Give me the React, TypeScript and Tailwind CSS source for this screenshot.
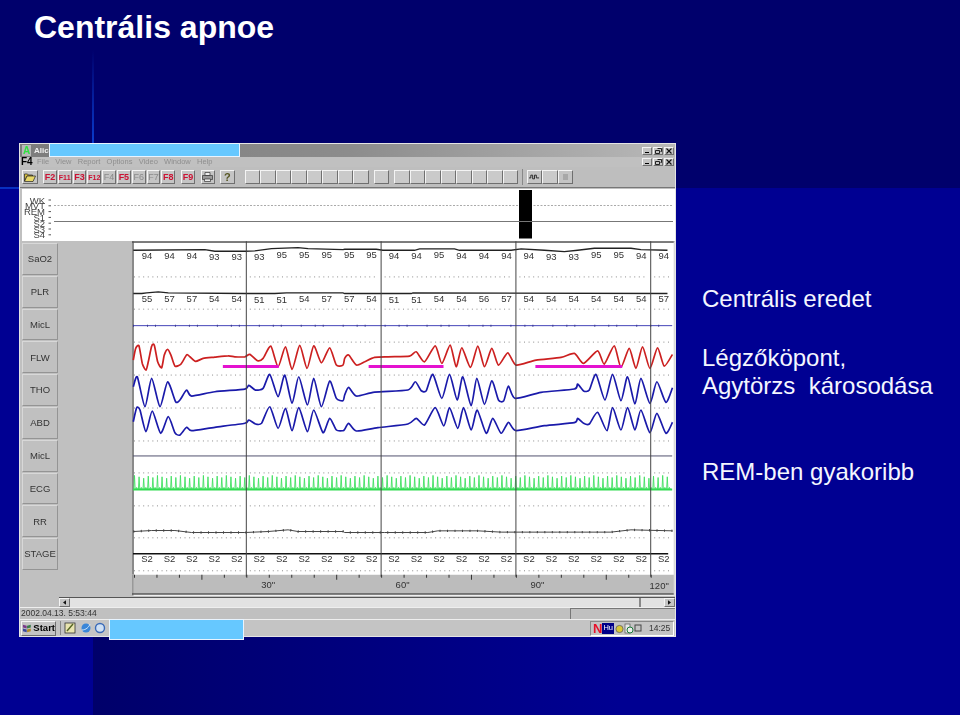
import React from "react";

type Pt = [number, number];
const Z3 = (pts: Pt[]): Pt[] => pts.map(([x, y]) => [15 + x / 3, 240 + y / 3]);
const Z4 = (pts: Pt[]): Pt[] => pts.map(([x, y]) => [345 + x / 3, 240 + y / 3]);
const Z5 = (pts: Pt[]): Pt[] => pts.map(([x, y]) => [15 + x / 3, 440 + y / 3]);
const Z6 = (pts: Pt[]): Pt[] => pts.map(([x, y]) => [345 + x / 3, 440 + y / 3]);

function smooth(p: Pt[], t = 0.11) {
  let d = `M${p[0][0].toFixed(1)} ${p[0][1].toFixed(1)}`;
  for (let i = 0; i < p.length - 1; i++) {
    const a = p[Math.max(0, i - 1)];
    const b = p[i];
    const c = p[i + 1];
    const e = p[Math.min(p.length - 1, i + 2)];
    d += `C${(b[0] + (c[0] - a[0]) * t).toFixed(1)} ${(b[1] + (c[1] - a[1]) * t).toFixed(1)} ${(c[0] - (e[0] - b[0]) * t).toFixed(1)} ${(c[1] - (e[1] - b[1]) * t).toFixed(1)} ${c[0].toFixed(1)} ${c[1].toFixed(1)}`;
  }
  return d;
}

const flw = [
  ...Z3([[355,360],[362,325],[372,317],[382,370],[393,390],[400,365],[410,318],[418,315],[428,365],[440,383],[448,345],[458,328],[468,345],[480,378],[498,372],[515,344],[525,350],[542,364],[565,355],[600,351],[640,347],[660,350],[690,350],[705,343],[728,362],[745,355],[768,318],[790,380],[812,320],[832,388],[855,316],[877,385],[897,317],[920,368],[945,323],[965,375],[985,375]]),
  ...Z4([[0,355],[12,345],[35,375],[60,365],[90,352],[130,350],[195,348],[215,335],[240,365],[272,317],[292,370],[317,315],[335,380],[352,323],[378,382],[400,318],[420,380],[442,325],[462,375],[490,338],[515,375],[575,360],[650,352],[690,340],[718,370],[760,332],[780,372],[810,317],[830,382],[855,325],[875,385],[895,320],[917,385],[940,323],[960,378],[985,343]]),
];
const tho = [
  ...Z3([[355,440],[367,410],[390,500],[410,415],[435,500],[458,425],[482,485],[495,480],[515,450],[530,468],[600,455],[690,447],[702,436],[722,450],[745,445],[765,403],[790,470],[810,405],[832,490],[852,410],[878,495],[897,415],[920,500],[945,423],[965,475],[985,482]]),
  ...Z4([[0,465],[12,442],[35,468],[90,456],[190,450],[212,425],[230,452],[245,452],[265,403],[292,475],[315,403],[338,480],[355,410],[380,497],[397,415],[420,493],[442,422],[462,480],[478,482],[492,438],[512,475],[590,457],[690,447],[700,432],[718,453],[735,450],[755,403],[782,480],[805,403],[830,482],[850,410],[872,492],[890,415],[917,490],[938,425],[965,487],[985,443]]),
];
const abd = [
  ...Z3([[355,545],[365,503],[375,510],[393,575],[412,513],[437,580],[460,530],[480,578],[495,585],[515,562],[530,572],[600,562],[690,550],[702,540],[722,552],[740,550],[765,500],[790,565],[812,505],[832,572],[852,503],[878,575],[897,510],[925,578],[945,535],[965,570],[985,572]]),
  ...Z4([[0,568],[12,550],[35,573],[100,563],[190,552],[215,535],[240,555],[272,503],[298,558],[315,503],[340,565],[357,503],[380,570],[398,510],[425,580],[445,535],[470,580],[492,547],[515,572],[600,557],[690,548],[700,535],[718,550],[735,552],[760,517],[788,572],[805,503],[830,570],[850,503],[872,570],[890,510],[917,578],[938,520],[965,580],[985,547]]),
];
const sao = [
  ...Z3([[355,30],[570,28],[600,33],[690,33],[720,32],[770,25],[850,22],[880,25],[985,28]]),
  ...Z4([[0,27],[95,27],[115,30],[210,30],[225,26],[330,26],[345,30],[500,30],[530,26],[600,30],[660,34],[700,30],[750,24],[860,24],[890,28],[970,30]]),
];
const plr = [
  ...Z3([[355,160],[380,160],[395,158],[430,155],[460,158],[690,160],[780,160],[815,158],[985,158]]),
  ...Z4([[0,160],[200,160],[205,158],[970,160]]),
];
const rr = [
  ...Z5([[355,275],[410,272],[480,272],[530,278],[600,278],[690,278],[760,275],[820,270],[850,275],[985,275]]),
  ...Z6([[0,278],[120,278],[250,278],[280,273],[400,273],[470,277],[640,277],[800,277],[860,270],[985,273]]),
];
const line = (p: Pt[]) => p.map(([x, y], i) => `${i ? "L" : "M"}${x.toFixed(1)} ${y.toFixed(1)}`).join("");

const saoVals = [94,94,94,93,93,93,95,95,95,95,95,94,94,95,94,94,94,94,93,93,95,95,94,94];
const plrVals = [55,57,57,54,54,51,51,54,57,57,54,51,51,54,54,56,57,54,54,54,54,54,54,57];
const dots = [276.7, 309, 342, 375, 408, 441, 473, 506, 538, 571];
const vert = [246.5, 381.5, 516.5, 651.5];
const segs: [number, number][] = [[134,243],[250,378],[385,513],[520,648],[655,672]];

let ecgD = "";
for (let i = 0; i < 117; i++) {
  const x = 134.5 + i * 4.6;
  const top = 475.5 + ((i * 7) % 5) * 0.7;
  ecgD += `M${(x - 0.7).toFixed(1)} 490L${x.toFixed(1)} ${top.toFixed(1)}L${(x + 0.7).toFixed(1)} 490M${(x + 1.2).toFixed(1)} 490L${(x + 2.2).toFixed(1)} 487.5L${(x + 3.2).toFixed(1)} 490`;
}

function Chart() {
  return (
    <svg viewBox="132 241 544 355" className="w-[544px] h-[355px] block">
      <rect x="132" y="241" width="544" height="355" fill="#fff" />
      <rect x="132" y="241" width="2" height="334" fill="#8a8a8a" />
      <rect x="132" y="241" width="544" height="1.5" fill="#555" />
      <rect x="132" y="575" width="544" height="19" fill="#bcbcbc" />
      <rect x="132" y="575" width="1.5" height="21" fill="#999" />
      <rect x="132" y="593.5" width="544" height="1.5" fill="#555" />
      <rect x="674.5" y="241" width="1.5" height="355" fill="#d8d8d8" />
      {dots.map((y) => segs.map(([a, b]) => (
        <line key={`${y}-${a}`} x1={a} x2={b} y1={y} y2={y} stroke="#8c8c8c" strokeWidth="1" strokeDasharray="1 3.6" />
      )))}
      <path d={line(sao)} fill="none" stroke="#222" strokeWidth="1.3" />
      <path d={line(plr)} fill="none" stroke="#222" strokeWidth="1.3" />
      <line x1="133" x2="673" y1="325.5" y2="325.5" stroke="#4444b8" strokeWidth="1" />
      <line x1="133" x2="673" y1="325.5" y2="325.5" stroke="#3a3a90" strokeWidth="2" strokeDasharray="1 13 1 7 1 19" />
      <line x1="133" x2="673" y1="456" y2="456" stroke="#50506e" strokeWidth="1" />
      <path d={ecgD} fill="none" stroke="#3fe060" strokeWidth="0.9" />
      <line x1="133" x2="673" y1="489.5" y2="489.5" stroke="#30dc50" strokeWidth="2" />
      <path d={line(rr)} fill="none" stroke="#444" strokeWidth="1" />
      <path d={line(rr)} fill="none" stroke="#444" strokeWidth="2.4" strokeDasharray="1 6.5" />
      <line x1="133" x2="669" y1="554" y2="554" stroke="#111" strokeWidth="1.4" />
      <path d={smooth(flw)} fill="none" stroke="#cc2020" strokeWidth="1.7" />
      <path d={smooth(tho)} fill="none" stroke="#1a1aaa" strokeWidth="1.7" />
      <path d={smooth(abd)} fill="none" stroke="#1a1aaa" strokeWidth="1.7" />
      <line x1="223" x2="279" y1="366.3" y2="366.3" stroke="#e412cf" strokeWidth="3" />
      <line x1="369" x2="444" y1="366.3" y2="366.3" stroke="#e412cf" strokeWidth="3" />
      <line x1="536" x2="623" y1="366.3" y2="366.3" stroke="#e412cf" strokeWidth="3" />
      {vert.map((x) => (
        <line key={x} x1={x} x2={x} y1="241" y2="577" stroke="#444" strokeWidth="1" />
      ))}
      {saoVals.map((v, i) => (
        <text key={i} x={147 + 22.5 * i} y={v === 93 ? 260 : v === 95 ? 257.5 : 258.5} textAnchor="middle" fontSize="9.5" fill="#333">{v}</text>
      ))}
      {plrVals.map((v, i) => (
        <text key={i} x={147 + 22.5 * i} y={v === 51 ? 302.5 : 302} textAnchor="middle" fontSize="9.5" fill="#333">{v}</text>
      ))}
      {saoVals.map((_, i) => (
        <text key={i} x={147 + 22.5 * i} y="562.5" textAnchor="middle" fontSize="9.5" fill="#333">S2</text>
      ))}
      {Array.from({ length: 24 }, (_, i) => (
        <line key={i} x1={134.5 + 22.5 * i} x2={134.5 + 22.5 * i} y1="575" y2={i % 6 === 3 ? 580 : 578} stroke="#333" strokeWidth="1" />
      ))}
      {[["30\"", 268.5, 588], ["60\"", 403, 588], ["90\"", 538, 588], ["120\"", 660, 589]].map(([t, x, y]) => (
        <text key={t as string} x={x as number} y={y as number} textAnchor="middle" fontSize="9.5" fill="#333">{t as string}</text>
      ))}
    </svg>
  );
}

const stages = ["WK", "MVT", "REM", "S1", "S2", "S3", "S4"];
function Hypnogram() {
  return (
    <svg viewBox="22 189 653 52" className="w-[653px] h-[52px] block">
      <rect x="22" y="189" width="653" height="52" fill="#fff" />
      {stages.map((s, i) => (
        <g key={s}>
          <text x="45" y={203.5 + i * 5.8} textAnchor="end" fontSize="9.5" fill="#444">{s}</text>
          <line x1="48.5" x2="51" y1={200 + i * 5.8} y2={200 + i * 5.8} stroke="#555" />
        </g>
      ))}
      <line x1="54" x2="673" y1="205.5" y2="205.5" stroke="#aaa" strokeDasharray="2 1.5" />
      <line x1="54" x2="673" y1="221.5" y2="221.5" stroke="#777" />
      <rect x="519" y="190" width="13" height="48.5" fill="#000" />
      <line x1="519" x2="532" y1="221.5" y2="221.5" stroke="#777" />
    </svg>
  );
}

const raised = "border border-t-[#f4f4f4] border-l-[#f4f4f4] border-b-[#6f6f6f] border-r-[#6f6f6f] bg-[#c4c4c4]";

function WinBtns() {
  return (
    <div className="flex gap-px">
      <div className={`${raised} w-[10px] h-[8px] flex items-end justify-center pb-px`}><div className="w-[4px] h-px bg-black" /></div>
      <div className={`${raised} w-[10px] h-[8px] flex items-center justify-center`}>
        <svg viewBox="0 0 7 6" className="w-[7px] h-[6px]"><path d="M2.5.5h4v3h-1M.5 2.5h4v3h-4z" fill="none" stroke="#111" strokeWidth=".9" /></svg>
      </div>
      <div className={`${raised} w-[10px] h-[8px] flex items-center justify-center`}>
        <svg viewBox="0 0 6 6" className="w-[6px] h-[6px]"><path d="M.5.5l5 5M5.5.5l-5 5" stroke="#111" strokeWidth="1.1" /></svg>
      </div>
    </div>
  );
}

const fkeys: [string, boolean, boolean][] = [
  ["F2", true, false], ["F11", true, true], ["F3", true, false], ["F12", true, true], ["F4", false, false],
  ["F5", true, false], ["F6", false, false], ["F7", false, false], ["F8", true, false],
];

function FKey({ label, on, small }: { label: string; on: boolean; small: boolean }) {
  return (
    <div className={`${raised} w-[13.8px] h-[14px] flex items-center justify-center leading-none ${on ? "font-bold text-[#cc1133]" : "text-[#8a8a8a]"} ${small ? "text-[7px]" : "text-[9px]"}`}>
      {label}
    </div>
  );
}

function Blank() {
  return <div className={`${raised} w-[15.5px] h-[14px] bg-[#cacaca]`} />;
}

function Toolbar() {
  return (
    <div className="h-[21px] flex items-center pl-[2px] bg-[#bebebe] border-b border-b-[#777]">
      <div className={`${raised} w-[16px] h-[14px] flex items-center justify-center`}>
        <svg viewBox="0 0 12 10" className="w-[12px] h-[10px]">
          <path d="M.5 2h3l1 1h4v1H3L.5 9z" fill="#d8c040" stroke="#222" strokeWidth=".7" />
          <path d="M3 4h8.5L9 9.5H.5z" fill="#e8d868" stroke="#222" strokeWidth=".7" />
        </svg>
      </div>
      <div className="ml-[5px] flex gap-px">
        {fkeys.map(([l, on, s]) => <FKey key={l} label={l} on={on} small={s} />)}
      </div>
      <div className="ml-[6px]"><FKey label="F9" on small={false} /></div>
      <div className={`${raised} ml-[6px] w-[14px] h-[14px] flex items-center justify-center`}>
        <svg viewBox="0 0 11 10" className="w-[11px] h-[10px]">
          <path d="M3 .5h5v3H3z" fill="#eee" stroke="#333" strokeWidth=".7" />
          <path d="M.5 3.5h10v4H.5z" fill="#999" stroke="#333" strokeWidth=".7" />
          <path d="M2.5 7h6v2.5h-6z" fill="#eee" stroke="#333" strokeWidth=".7" />
        </svg>
      </div>
      <div className={`${raised} ml-[5px] w-[15px] h-[14px] flex items-center justify-center text-[11px] font-bold leading-none text-[#555522]`}>?</div>
      <div className="ml-[10px] flex"><Blank /><Blank /><Blank /><Blank /><Blank /><Blank /><Blank /><Blank /></div>
      <div className="ml-[5px]"><Blank /></div>
      <div className="ml-[5px] flex"><Blank /><Blank /><Blank /><Blank /><Blank /><Blank /><Blank /><Blank /></div>
      <div className="ml-[4px] w-px h-[16px] bg-[#888]" />
      <div className={`${raised} ml-[4px] w-[15px] h-[14px] flex items-center justify-center`}>
        <svg viewBox="0 0 12 6" className="w-[11px] h-[6px]"><path d="M0 4h2V1h2v4h2V1h2v3h3" fill="none" stroke="#222" strokeWidth="1" /></svg>
      </div>
      <Blank />
      <div className={`${raised} w-[15px] h-[14px] flex items-center justify-center`}><div className="w-[5px] h-[6px] bg-[#a8a8a8]" /></div>
    </div>
  );
}

const sideLabels = ["SaO2", "PLR", "MicL", "FLW", "THO", "ABD", "MicL", "ECG", "RR", "STAGE"];

function Taskbar() {
  return (
    <div className="h-[17px] flex items-center bg-[#c4c4c4] border-t border-t-[#eee] relative">
      <div className={`${raised} ml-px w-[35px] h-[15px] flex items-center justify-center gap-[2px] text-[9.5px] font-bold leading-none text-black`}>
        <svg viewBox="0 0 10 10" className="w-[10px] h-[11px]">
          <path d="M1 1l4 1v3L1 4z" fill="#7a3a8a" /><path d="M5.4 2l4-1v3l-4 1z" fill="#3a7a4a" />
          <path d="M1 5l4 1v3L1 8z" fill="#3a4a9a" /><path d="M5.4 6l4-1v3l-4 1z" fill="#b08a2a" />
        </svg>
        Start
      </div>
      <div className="ml-[4px] w-px h-[14px] bg-[#888]" />
      <svg viewBox="0 0 42 12" className="ml-[3px] w-[42px] h-[12px]">
        <rect x="1" y="1" width="10" height="10" fill="#e8e4b0" stroke="#333" strokeWidth=".8" />
        <path d="M3 9l6-7" stroke="#556622" strokeWidth="1.4" />
        <circle cx="22" cy="6" r="4.5" fill="#3a86d8" /><path d="M18 8c4 0 7-3 8-6" stroke="#cfe6fa" strokeWidth="1" fill="none" />
        <circle cx="36" cy="6" r="4.5" fill="#cfe0f4" stroke="#3a6ab8" strokeWidth="1.4" />
      </svg>
      <div className="ml-auto mr-px h-[15px] w-[84px] flex items-center border border-t-[#888] border-l-[#888] border-b-white border-r-white pl-[2px] text-[8.5px] text-[#333] leading-none">
        <span className="font-bold text-[13px] text-[#e8102a] leading-none">N</span>
        <span className="bg-[#000088] text-white text-[7.5px] px-px h-[11px] flex items-center">Hu</span>
        <svg viewBox="0 0 28 11" className="ml-px w-[28px] h-[11px]">
          <circle cx="4.5" cy="6" r="3.6" fill="#d8c838" stroke="#555" strokeWidth=".7" />
          <rect x="10" y="1" width="5" height="9" fill="#e8e8e8" stroke="#555" strokeWidth=".7" />
          <circle cx="15" cy="7" r="3" fill="#eee" stroke="#1a7a3a" strokeWidth="1" />
          <rect x="20" y="2" width="6" height="6" fill="none" stroke="#444" strokeWidth="1" />
        </svg>
        <span className="ml-[6px]">14:25</span>
      </div>
    </div>
  );
}

function AppWindow() {
  return (
    <div className="w-[657px] h-[494px] relative shrink-0 font-['Liberation_Sans',sans-serif]">
      <div className="w-full h-full bg-[#c0c0c0] border border-[#e4e4e4] flex flex-col blur-[0.4px]">
        <div className="h-[13px] flex items-center justify-between pl-[2px] pr-px bg-[linear-gradient(to_right,#7c7c7c,#8c8c8c_50%,#b8b8b8)]">
          <div className="flex items-center gap-[3px] leading-none">
            <span className="bg-[#b8b8b8] w-[9px] h-[11px] flex items-center justify-center text-[10px] font-bold text-[#30e040]">A</span>
            <span className="text-[8px] font-bold text-[#f0f0f0]">Alice</span>
          </div>
          <WinBtns />
        </div>
        <div className="h-[10px] flex items-center justify-between pl-[1px] pr-px bg-[#c0c0c0]">
          <div className="flex items-center text-[7.5px] leading-none text-[#8e8e8e] gap-[6.3px]">
            <span className="text-[10px] font-bold text-black -mr-[2px]">F4</span>
            <span>File</span><span>View</span><span>Report</span><span>Options</span><span>Video</span><span>Window</span><span>Help</span>
          </div>
          <WinBtns />
        </div>
        <Toolbar />
        <div className="ml-[2px] mt-px"><Hypnogram /></div>
        <div className="flex h-[355px]">
          <div className="w-[112px] flex flex-col gap-px pt-[2px] pl-[2px]">
            {sideLabels.map((l, i) => (
              <div key={i} className="w-[36px] h-[31.8px] flex items-center justify-center border border-t-[#d8d8d8] border-l-[#d8d8d8] border-b-[#949494] border-r-[#949494] text-[9.5px] text-[#333] leading-none">{l}</div>
            ))}
          </div>
          <Chart />
        </div>
        <div className="h-[10px] mt-px ml-[39px] flex bg-[#e2e2e2] border-t border-t-[#555]">
          <div className={`${raised} w-[11px] flex items-center justify-center`}>
            <svg viewBox="0 0 4 6" className="w-[3px] h-[5px]"><path d="M4 0v6L0 3z" fill="#111" /></svg>
          </div>
          <div className="ml-[569px] w-[2px] bg-[#888]" />
          <div className={`${raised} ml-auto w-[11px] flex items-center justify-center`}>
            <svg viewBox="0 0 4 6" className="w-[3px] h-[5px]"><path d="M0 0v6l4-3z" fill="#111" /></svg>
          </div>
        </div>
        <div className="flex-1 flex items-center justify-between border-t border-t-[#eee] bg-[#c0c0c0] text-[8.5px] text-[#333] leading-none">
          <span className="pl-px">2002.04.13. 5:53:44</span>
          <div className="self-stretch w-[105px] border-l border-l-[#777] border-t border-t-[#777]" />
        </div>
        <Taskbar />
      </div>
      <div className="absolute left-[30px] top-0 w-[191px] h-[14px] bg-[#66c8ff] border border-[#e8f4ff]" />
      <div className="absolute left-[90px] top-[476px] w-[135px] h-[21px] bg-[#66c8ff] border border-[#e8f4ff]" />
    </div>
  );
}

export default function App() {
  return (
    <div className="relative w-[960px] h-[715px] overflow-hidden text-white font-['Liberation_Sans',sans-serif] bg-[linear-gradient(to_bottom,#00006c_188px,transparent_188px),linear-gradient(to_right,#000092_93px,#00006a_93px,#000092_620px)]">
      <div className="absolute left-[92px] top-[50px] w-[2px] h-[93px] bg-[linear-gradient(to_bottom,#00006c,#0a3ccc)]" />
      <div className="absolute left-0 top-[187px] w-[19px] h-[2px] bg-[#0830c0]" />
      <h1 className="relative pl-[34px] pt-[9px] h-[143px] text-[32px] font-bold leading-[37px]">Centrális apnoe</h1>
      <div className="relative flex pl-[19px]">
        <AppWindow />
        <div className="ml-[26px] pt-[142px] text-[24px] leading-[28px] whitespace-pre text-[#f4f6ff]">
          <p>Centrális eredet</p>
          <p className="mt-[31px]">Légzőköpont,</p>
          <p>Agytörzs  károsodása</p>
          <p className="mt-[58px]">REM-ben gyakoribb</p>
        </div>
      </div>
    </div>
  );
}
